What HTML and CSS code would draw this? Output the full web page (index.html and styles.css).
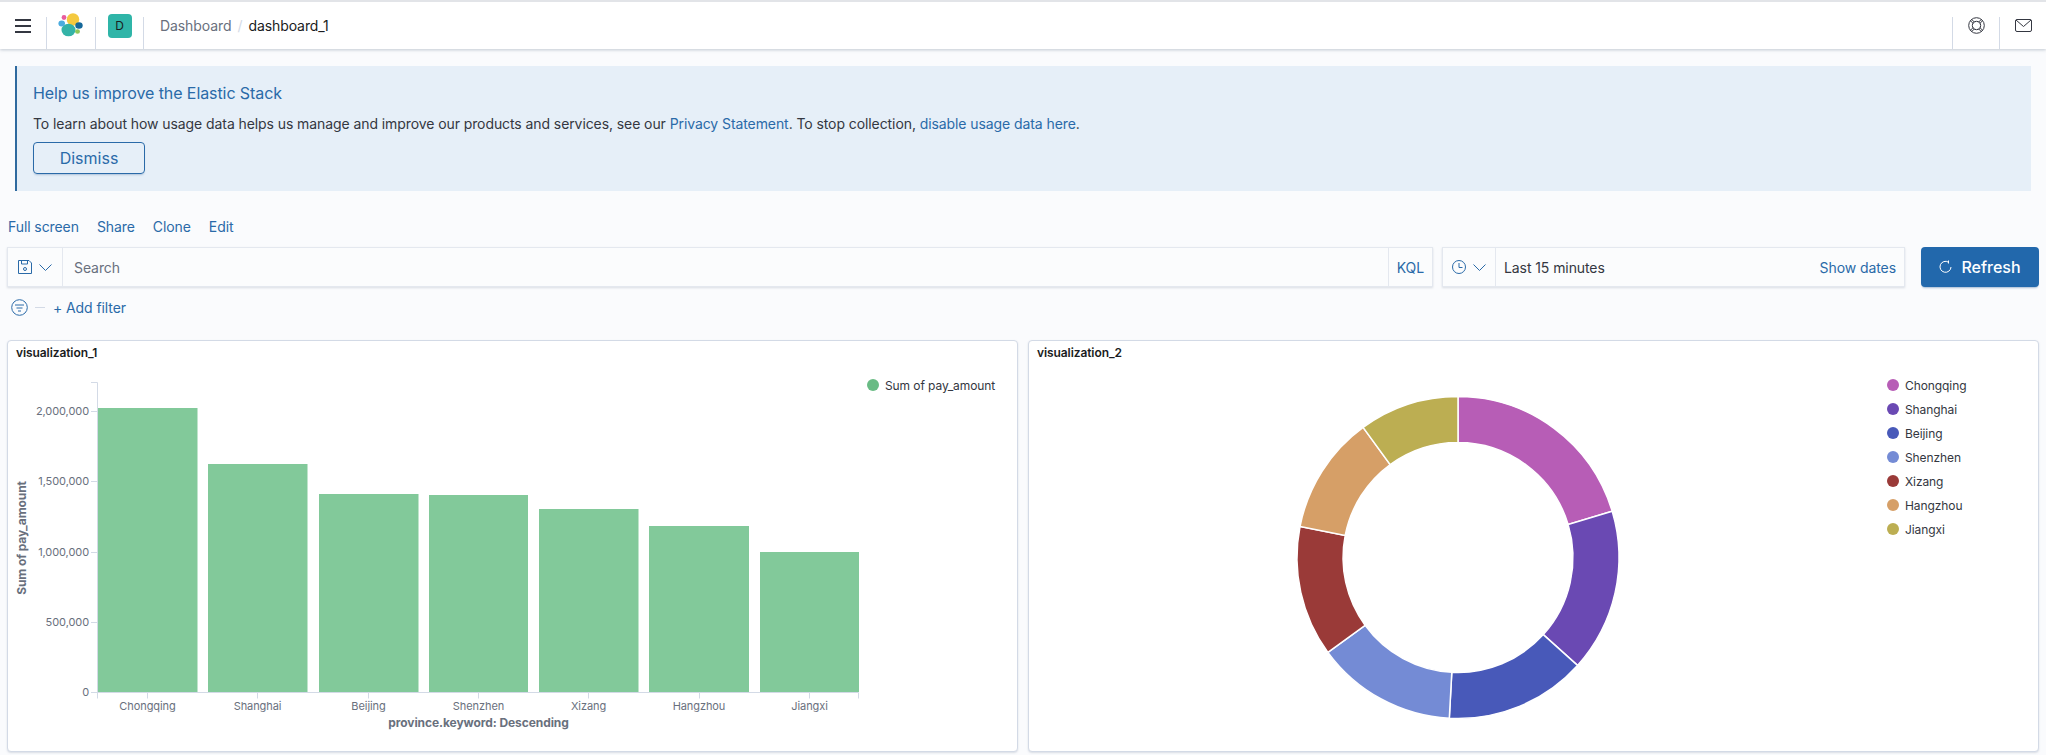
FILE: index.html
```html
<!DOCTYPE html>
<html lang="en">
<head>
<meta charset="utf-8">
<title>dashboard_1 - Kibana</title>
<link rel="stylesheet" href="styles.css">
</head>
<body>
<header class="topbar">
  <div class="cell cell-menu">
    <svg class="icon-menu" width="16" height="14" viewBox="0 0 16 14"><path d="M0 1h16M0 7h16M0 13h16" stroke="#343741" stroke-width="2" fill="none"/></svg>
  </div>
  <span class="sep"></span>
  <div class="cell cell-logo">
    <svg width="26" height="26" viewBox="0 0 26 26">
      <circle cx="15" cy="7.500" r="6.200" fill="#f4c93f"/>
      <ellipse cx="10.500" cy="18" rx="7" ry="6.300" fill="#34b3a7"/>
      <circle cx="6" cy="5.500" r="2.400" fill="#e85d9e"/>
      <ellipse cx="3.700" cy="11.500" rx="3.300" ry="3" fill="#4bacdf"/>
      <ellipse cx="21" cy="13.500" rx="3.700" ry="3.300" fill="#15689a"/>
      <ellipse cx="19.500" cy="19.500" rx="2.500" ry="2.300" fill="#8ec75a"/>
    </svg>
  </div>
  <span class="sep"></span>
  <div class="cell cell-space"><span class="avatar">D</span></div>
  <span class="sep"></span>
  <nav class="crumbs">
    <span class="crumb">Dashboard</span>
    <span class="crumb-slash">/</span>
    <span class="crumb-current">dashboard_1</span>
  </nav>
  <span class="sep"></span>
  <div class="cell cell-help">
    <svg width="17" height="17" viewBox="0 0 17 17" fill="none" stroke="#343741" stroke-width="1"><circle cx="8.500" cy="8.500" r="7.800"/><circle cx="8.500" cy="8.500" r="4.200"/><path d="M2.500 3.800l2.800 2.800M3.800 2.500l2.800 2.800M14.500 3.800l-2.800 2.800M13.200 2.500l-2.800 2.800M2.500 13.200l2.800-2.800M3.800 14.500l2.800-2.800M14.500 13.200l-2.800-2.800M13.200 14.500l-2.800-2.800"/></svg>
  </div>
  <span class="sep"></span>
  <div class="cell cell-mail">
    <svg width="17" height="13" viewBox="0 0 17 13" fill="none" stroke="#343741" stroke-width="1"><rect x=".5" y=".5" width="16" height="12" rx="1.500"/><path d="M1 1l7.500 6.500L16 1"/></svg>
  </div>
</header>

<main class="page">
  <section class="banner">
    <h2 class="banner-title">Help us improve the Elastic Stack</h2>
    <p class="banner-text">To learn about how usage data helps us manage and improve our products and services, see our <a class="link">Privacy Statement</a>. To stop collection, <a class="link">disable usage data here</a>.</p>
    <button class="btn-dismiss">Dismiss</button>
  </section>

  <nav class="actions">
    <a class="link">Full screen</a>
    <a class="link">Share</a>
    <a class="link">Clone</a>
    <a class="link">Edit</a>
  </nav>

  <div class="query-row">
    <div class="search-box">
      <div class="prepend prepend-save">
        <svg width="14" height="14" viewBox="0 0 14 14" fill="none" stroke="#2a6aa8"><path d="M.5.5h10.500l2.500 2.500v10.500H.5z"/><path d="M3.500.5v3.500h6V.5"/><circle cx="7" cy="9" r="1.500"/></svg>
        <svg width="13" height="7" viewBox="0 0 13 7" fill="none" stroke="#2a6aa8"><path d="M.5.5l6 6 6-6"/></svg>
      </div>
      <span class="search-text">Search</span>
      <a class="link kql">KQL</a>
    </div>
    <div class="date-box">
      <div class="prepend prepend-date">
        <svg width="14" height="14" viewBox="0 0 14 14" fill="none" stroke="#2a6aa8"><circle cx="7" cy="7" r="6.500"/><path d="M7 3v4.500h3.500"/></svg>
        <svg width="13" height="7" viewBox="0 0 13 7" fill="none" stroke="#2a6aa8"><path d="M.5.5l6 6 6-6"/></svg>
      </div>
      <span class="date-text">Last 15 minutes</span>
      <a class="link show-dates">Show dates</a>
    </div>
    <button class="btn-refresh">
      <svg width="13" height="14" viewBox="0 0 13 14" fill="none" stroke="#fff"><path d="M9.500 2.200A5.500 5.500 0 1 0 12 7M9.500 .5v3"/></svg>
      Refresh
    </button>
  </div>

  <div class="filter-row">
    <svg width="17" height="17" viewBox="0 0 17 17" fill="none" stroke="#2a6aa8"><circle cx="8.500" cy="8.500" r="7.800"/><path d="M4 6h9M5.500 9h6M7 12h3"/></svg>
    <span class="filter-dash"></span>
    <a class="link">+ Add filter</a>
  </div>

  <div class="panels">
    <article class="panel">
      <h3 class="panel-title">visualization_1</h3>
      <div class="panel-body">
        <svg class="chart" viewBox="8 367 859 384" width="859" height="384">
          <g class="bars">
            <rect x="98" y="408" width="99.500" height="284"/>
            <rect x="208" y="464" width="99.500" height="228"/>
            <rect x="319" y="494" width="99.500" height="198"/>
            <rect x="429" y="495" width="99" height="197"/>
            <rect x="539" y="509" width="99.500" height="183"/>
            <rect x="649" y="526" width="100" height="166"/>
            <rect x="760" y="552" width="99" height="140"/>
          </g>
          <path class="axis" d="M91 382.500h6.500V692.500M91 411.500h6.500M91 481.500h6.500M91 552.500h6.500M91 622.500h6.500M91 692.500H858.500M97.500 692.500v6M147.500 692.500v6M257.500 692.500v6M368.500 692.500v6M478.500 692.500v6M588.500 692.500v6M699.500 692.500v6M809.500 692.500v6M858.500 692.500v6"/>
          <g class="tick-y">
            <text x="89" y="415">2,000,000</text>
            <text x="89" y="485">1,500,000</text>
            <text x="89" y="556">1,000,000</text>
            <text x="89" y="626">500,000</text>
            <text x="89" y="696">0</text>
          </g>
          <g class="tick-x">
            <text x="147.500" y="710">Chongqing</text>
            <text x="257.500" y="710">Shanghai</text>
            <text x="368.500" y="710">Beijing</text>
            <text x="478.500" y="710">Shenzhen</text>
            <text x="588.500" y="710">Xizang</text>
            <text x="699" y="710">Hangzhou</text>
            <text x="809.500" y="710">Jiangxi</text>
          </g>
          <text class="axis-title" x="478.500" y="727">province.keyword: Descending</text>
          <text class="axis-title" transform="translate(26 538) rotate(-90)">Sum of pay_amount</text>
        </svg>
        <ul class="legend">
          <li class="legend-item"><span class="dot dot-green"></span>Sum of pay_amount</li>
        </ul>
      </div>
    </article>

    <article class="panel">
      <h3 class="panel-title">visualization_2</h3>
      <div class="panel-body">
        <svg class="chart" viewBox="1029 367 858 384" width="858" height="384">
          <g class="donut" transform="translate(1458 557.500)">
            <path fill="#b75db6" d="M0-161A161 161 0 0 1 154.200-46.300L110.100-33A115 115 0 0 0 0-115Z"/>
            <path fill="#6a49b3" d="M154.200-46.300A161 161 0 0 1 119.500 107.900L85.300 77.100A115 115 0 0 0 110.100-33Z"/>
            <path fill="#4859b9" d="M119.500 107.900A161 161 0 0 1-8.700 160.800L-6.200 114.800A115 115 0 0 0 85.300 77.100Z"/>
            <path fill="#748bd5" d="M-8.700 160.800A161 161 0 0 1-130.100 94.900L-92.900 67.800A115 115 0 0 0-6.200 114.800Z"/>
            <path fill="#9a3a38" d="M-130.100 94.900A161 161 0 0 1-158-31L-112.800-22.100A115 115 0 0 0-92.900 67.800Z"/>
            <path fill="#d69f67" d="M-158-31A161 161 0 0 1-94.900-130.100L-67.800-92.900A115 115 0 0 0-112.800-22.100Z"/>
            <path fill="#bcae52" d="M-94.900-130.100A161 161 0 0 1 0-161L0-115A115 115 0 0 0-67.800-92.900Z"/>
          </g>
        </svg>
        <ul class="legend">
          <li class="legend-item"><span class="dot dot-1"></span>Chongqing</li>
          <li class="legend-item"><span class="dot dot-2"></span>Shanghai</li>
          <li class="legend-item"><span class="dot dot-3"></span>Beijing</li>
          <li class="legend-item"><span class="dot dot-4"></span>Shenzhen</li>
          <li class="legend-item"><span class="dot dot-5"></span>Xizang</li>
          <li class="legend-item"><span class="dot dot-6"></span>Hangzhou</li>
          <li class="legend-item"><span class="dot dot-7"></span>Jiangxi</li>
        </ul>
      </div>
    </article>
  </div>
</main>
</body>
</html>
```

FILE: styles.css
```css
* { box-sizing: border-box; }

html, body {
  margin: 0;
  height: 755px;
  overflow: hidden;
}

body {
  background: #fafbfd;
  color: #343741;
  font-family: Inter, "Liberation Sans", sans-serif;
  font-size: 14px;
  letter-spacing: -.085px;
}

.link { color: #2a6aa8; }

/* Top bar */
.topbar {
  display: flex;
  height: 49px;
  background: #fff;
  border-top: 2px solid #e2e4e8;
  box-shadow: 0 1px 3px rgba(90, 105, 130, .35);
}

.sep {
  align-self: flex-end;
  flex: none;
  width: 1px;
  height: 32px;
  background: #d3dae6;
}

.cell {
  display: flex;
  flex: none;
  align-items: center;
  justify-content: center;
  height: 47px;
}

.cell-menu { width: 46px; }
.cell-logo { width: 48px; }
.cell-logo svg { margin-top: -1px; }
.cell-space { width: 47px; }
.cell-help { width: 46px; }
.cell-mail { width: 46px; }

.avatar {
  display: flex;
  align-items: center;
  justify-content: center;
  width: 24px;
  height: 24px;
  border-radius: 4px;
  background: #2fb5a8;
  color: #1a1c21;
  font-size: 12px;
}

.crumbs {
  display: flex;
  flex: 1;
  align-items: center;
  gap: 6px;
  padding-left: 16px;
}

.crumb { color: #69707d; }
.crumb-slash { color: #d3dae6; }
.crumb-current { color: #1a1c21; }

/* Page */
.page { padding: 17px 7px 0; }

.banner {
  margin: 0 8px 0 8px;
  height: 125px;
  padding: 15px 16px 0;
  background: #e6eff8;
  border-left: 2px solid #2f6a9f;
}

.banner-title {
  margin: 0;
  color: #2a6aa8;
  font-size: 16px;
  font-weight: 400;
  line-height: 24px;
}

.banner-text {
  margin: 8px 0 0;
  line-height: 21px;
}

.btn-dismiss {
  display: block;
  width: 112px;
  height: 32px;
  margin-top: 8px;
  padding: 0;
  background: transparent;
  border: 1px solid #2a6aa8;
  border-radius: 4px;
  box-shadow: 0 2px 2px -1px rgba(40, 90, 150, .3);
  color: #2a6aa8;
  font: 400 16px Inter, "Liberation Sans", sans-serif;
}

.actions {
  display: flex;
  gap: 18px;
  height: 21px;
  margin-top: 25px;
  padding-left: 1px;
  line-height: 21px;
}

/* Search row */
.query-row {
  display: flex;
  height: 40px;
  margin-top: 10px;
}

.search-box,
.date-box {
  display: flex;
  align-items: center;
  background: #fbfcfd;
  border: 1px solid #e4e8ef;
  box-shadow: 0 1px 2px rgba(90, 105, 130, .2);
}

.search-box { flex: 1; }

.date-box {
  flex: none;
  width: 463px;
  margin-left: 9px;
}

.prepend {
  display: flex;
  flex: none;
  align-items: center;
  gap: 7px;
  height: 100%;
  border-right: 1px solid #e4e8ef;
}

.prepend-save { width: 55px; padding-left: 10px; }
.prepend-date { width: 53px; padding-left: 9px; }

.search-text {
  flex: 1;
  padding-left: 11px;
  color: #69707d;
}

.kql {
  display: flex;
  align-items: center;
  height: 100%;
  padding: 0 8px 0 8px;
  border-left: 1px solid #e4e8ef;
}

.date-text {
  flex: 1;
  padding-left: 8px;
  color: #343741;
}

.show-dates { padding-right: 8px; }

.btn-refresh {
  display: flex;
  flex: none;
  align-items: center;
  justify-content: center;
  gap: 9px;
  width: 118px;
  margin-left: 16px;
  background: #2268ac;
  border: 0;
  border-radius: 4px;
  box-shadow: 0 2px 2px -1px rgba(40, 90, 150, .4);
  color: #fff;
  font: 500 16px Inter, "Liberation Sans", sans-serif;
}

/* Filter row */
.filter-row {
  display: flex;
  align-items: center;
  height: 20px;
  margin-top: 10px;
  padding-left: 4px;
}

.filter-dash {
  width: 10px;
  height: 1px;
  margin: 0 8px 0 7px;
  background: #d3dae6;
}

/* Panels */
.panels {
  display: grid;
  grid-template-columns: 1011px 1011px;
  gap: 10px;
  margin-top: 23px;
}

.panel {
  display: flex;
  flex-direction: column;
  height: 412px;
  background: #fff;
  border: 1px solid #d3dae6;
  border-radius: 4px;
  box-shadow: 0 1px 2px rgba(90, 105, 130, .2);
}

.panel-title {
  height: 26px;
  margin: 0;
  padding: 4px 8px 0;
  color: #1a1c21;
  font-size: 12px;
  font-weight: 600;
  line-height: 16px;
}

.panel-body { display: flex; flex: 1; }

.chart { display: block; flex: none; }

.bars rect { fill: #82c99a; }

.axis {
  fill: none;
  stroke: #d3dae6;
  stroke-width: 1;
}

.donut path {
  stroke: #fff;
  stroke-width: 1.5;
}

.tick-y text,
.tick-x text {
  fill: #69707d;
  font-size: 11px;
}

.tick-y text { text-anchor: end; }
.tick-x text { text-anchor: middle; }

.axis-title {
  fill: #69707d;
  font-size: 12px;
  font-weight: 700;
  text-anchor: middle;
}

/* Legends */
.legend {
  flex: 1;
  margin: 0;
  padding: 6px 0 0;
  list-style: none;
}

.legend-item {
  display: flex;
  align-items: center;
  gap: 6px;
  height: 24px;
  color: #343741;
  font-size: 12px;
}

.dot {
  flex: none;
  width: 12px;
  height: 12px;
  border-radius: 50%;
}

.dot-green { background: #69bb84; }
.dot-1 { background: #b75db6; }
.dot-2 { background: #6a49b3; }
.dot-3 { background: #4859b9; }
.dot-4 { background: #748bd5; }
.dot-5 { background: #9a3a38; }
.dot-6 { background: #d69f67; }
.dot-7 { background: #bcae52; }
```
